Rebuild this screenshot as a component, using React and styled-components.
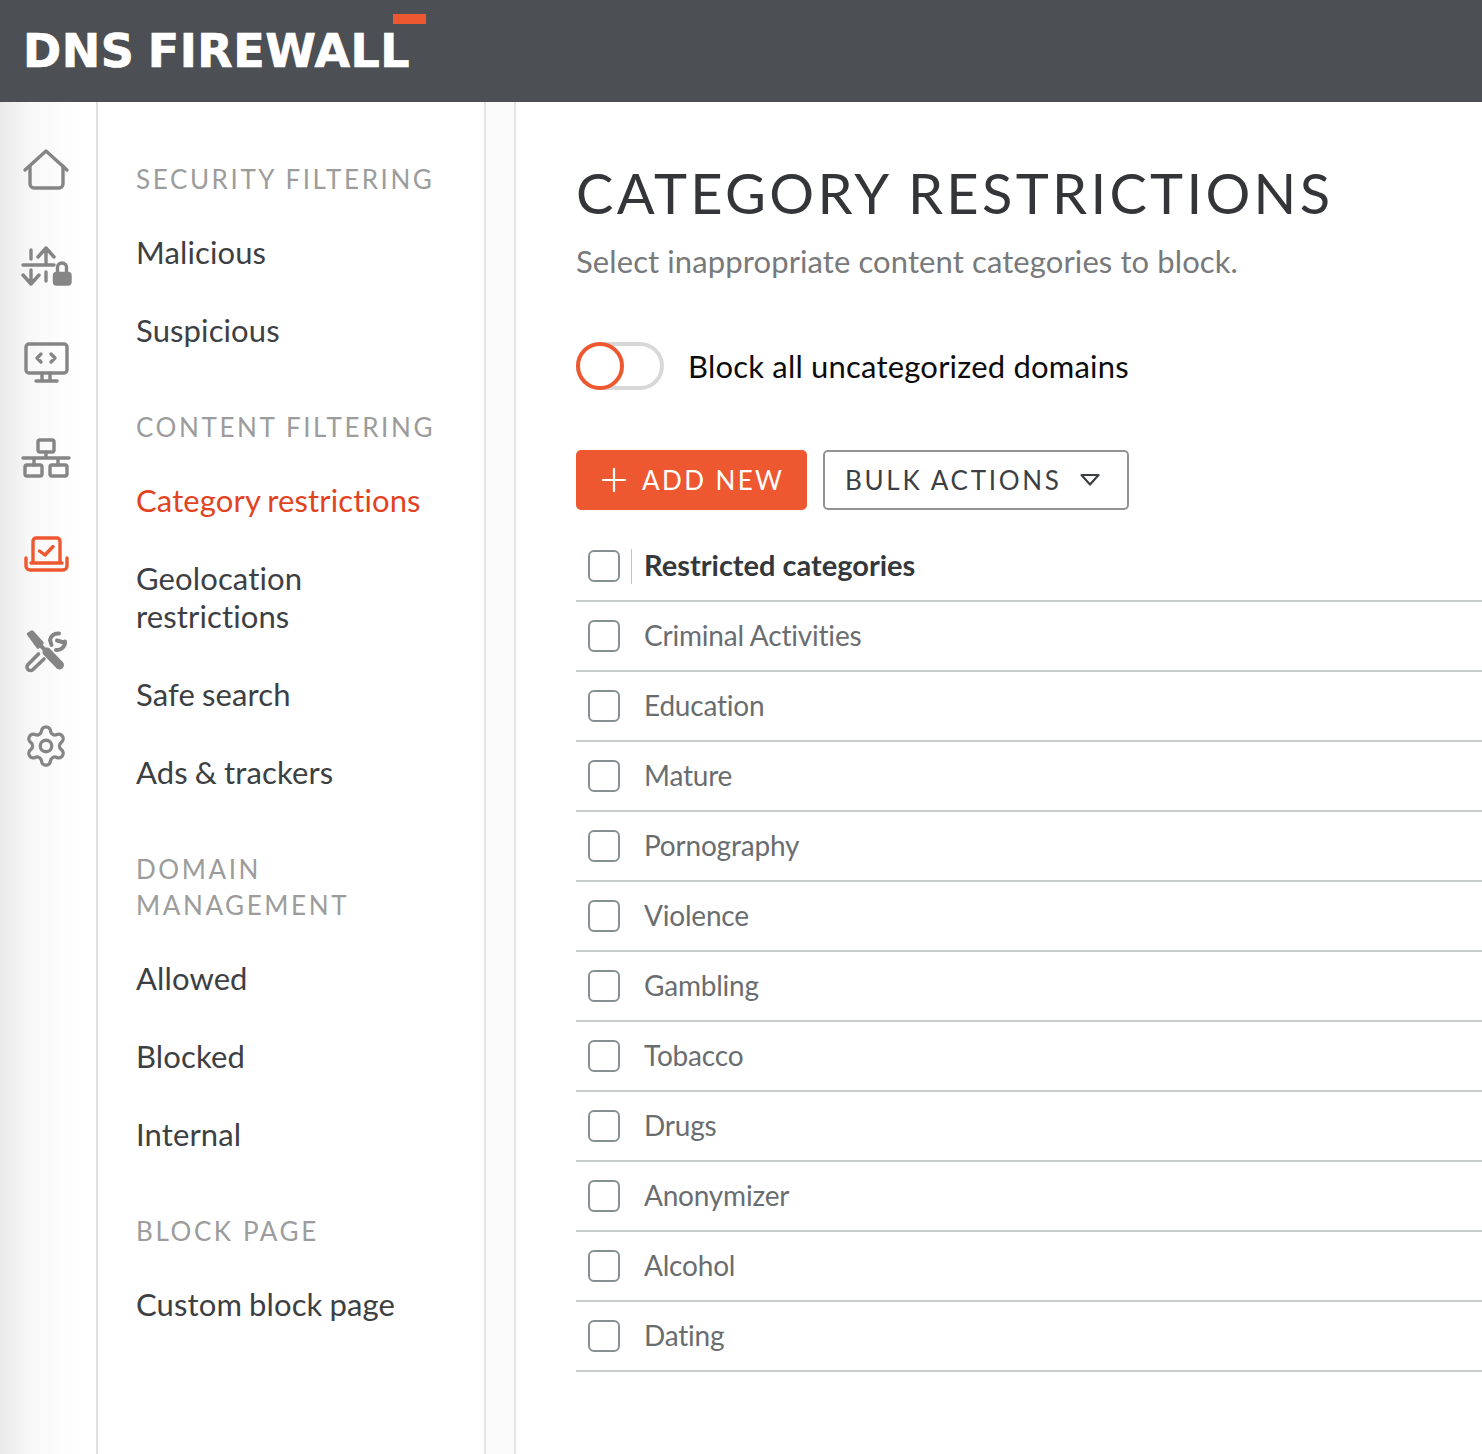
import React from "react";
import styled, { createGlobalStyle } from "styled-components";
import { Settings, Plus } from "lucide-react";

const Global = createGlobalStyle`
  html, body { margin: 0; padding: 0; background: #fff; }
  body { font-family: Lato, "Open Sans", sans-serif; font-variant-ligatures: none; }
  * { box-sizing: border-box; }
`;
const Page = styled.div`width: 1482px; height: 1454px; display: flex; flex-direction: column; overflow: hidden;`;
const Header = styled.header`height: 102px; background: #4c4f53; display: flex; align-items: flex-start; padding: 14px 0 0 23px; flex: none;`;
const Logo = styled.div`
  position: relative; font-family: "DejaVu Sans", sans-serif; font-weight: 700; font-size: 46px; line-height: 74px; color: #fff; letter-spacing: 0.5px; white-space: nowrap;
  -webkit-text-stroke: 0.7px #fff; word-spacing: -3px;
`;
const LogoBar = styled.span`position: absolute; right: -16px; top: 0; width: 33px; height: 10px; background: #ee5830;`;
const Body = styled.div`flex: 1; display: flex; min-height: 0;`;
const Rail = styled.nav`
  width: 98px; flex: none; padding-top: 20px; display: flex; flex-direction: column;
  background: linear-gradient(90deg, #e9e9e9 0, #f8f8f8 30px, #fff 80px); border-right: 2px solid #e0e0e0;
`;
const RailSlot = styled.div`height: 96px; display: flex; align-items: center; justify-content: flex-start; padding-left: 14px; color: ${p => p.$active ? "#ee5830" : "#858585"};`;
const Side = styled.aside`width: 388px; flex: none; padding: 59px 0 0 38px; border-right: 2px solid #e4e4e4;`;
const Gutter = styled.div`width: 30px; flex: none; background: #fbfbfb; border-right: 2px solid #e4e4e4;`;
const Group = styled.section`& + & { margin-top: 38px; }`;
const GroupTitle = styled.h3`
  margin: 0 0 18px; font-weight: 400; font-size: 26px; line-height: 36px; letter-spacing: 2.6px; color: #9c9c9c; width: 320px;
`;
const NavItem = styled.div`font-size: 31px; line-height: 38px; padding: 18px 0 22px; letter-spacing: 0.12px; word-spacing: -1px; color: ${p => p.$active ? "#e2431f" : "#3d4043"}; width: 300px;`;
const Main = styled.main`flex: 1; padding: 58px 0 0 60px; min-width: 0;`;
const Title = styled.h1`margin: 0; font-weight: 400; font-size: 56px; line-height: 66px; letter-spacing: 3.3px; color: #333538; white-space: nowrap;`;
const Sub = styled.p`margin: 16px 0 0; font-size: 31px; line-height: 38px; letter-spacing: 0.1px; color: #77797b; white-space: nowrap;`;
const ToggleRow = styled.div`display: flex; align-items: center; margin-top: 62px; height: 48px;`;
const Toggle = styled.div`position: relative; width: 88px; height: 48px; border-radius: 24px; border: 4px solid #d8d8d8; background: #fff;`;
const Knob = styled.span`position: absolute; left: -4px; top: -4px; width: 48px; height: 48px; border-radius: 50%; border: 4px solid #ee5830; background: #fff;`;
const ToggleLabel = styled.span`margin-left: 24px; font-size: 31px; line-height: 34px; letter-spacing: 0.2px; color: #0c0c0c;`;
const Actions = styled.div`display: flex; gap: 16px; margin-top: 60px;`;
const AddButton = styled.button`
  width: 231px; height: 60px; border: 0; border-radius: 5px; background: #ee5830; color: #fff; display: flex; align-items: center; padding: 0 0 0 19px; gap: 9px;
  font: 400 26px Lato, sans-serif; letter-spacing: 2.4px;
`;
const BulkButton = styled.button`
  width: 306px; height: 60px; border: 2px solid #939393; border-radius: 5px; background: #fff; color: #3d4043; display: flex; align-items: center; padding: 0 0 0 20px;
  font: 400 26px Lato, sans-serif; letter-spacing: 2.7px;
`;
const Caret = styled.svg`margin-left: 16px; flex: none;`;
const Table = styled.div`margin-top: 22px;`;
const Row = styled.div`height: 70px; display: flex; align-items: center; padding-left: 12px; border-bottom: 2px solid #c8cbcd;`;
const Check = styled.span`width: 32px; height: 32px; border: 2px solid #859092; border-radius: 6px; background: #fff; flex: none;`;
const HeadDivider = styled.span`width: 1px; height: 35px; background: #c4c4c4; margin: 0 12px 0 11px; flex: none;`;
const HeadLabel = styled.span`font-size: 29px; line-height: 34px; margin-top: -2px; font-weight: 700; color: #35383b;`;
const RowLabel = styled.span`margin: -2px 0 0 24px; font-size: 28px; line-height: 34px; letter-spacing: -0.2px; color: #6a6d70;`;

const I = ({ cy, children, fill = "none" }) => (
  <svg width="64" height="64" viewBox={`14 ${cy - 32} 64 64`} fill={fill} stroke="currentColor" strokeWidth="3.4" strokeLinecap="round" strokeLinejoin="round">{children}</svg>
);

const groups = [
  ["SECURITY FILTERING", ["Malicious", "Suspicious"]],
  ["CONTENT FILTERING", ["Category restrictions", "Geolocation restrictions", "Safe search", "Ads & trackers"]],
  ["DOMAIN MANAGEMENT", ["Allowed", "Blocked", "Internal"]],
  ["BLOCK PAGE", ["Custom block page"]],
];
const cats = ["Criminal Activities", "Education", "Mature", "Pornography", "Violence", "Gambling", "Tobacco", "Drugs", "Anonymizer", "Alcohol", "Dating"];

export default function App() {
  return (
    <Page>
      <Global />
      <Header><Logo>DNS FIREWALL<LogoBar /></Logo></Header>
      <Body>
        <Rail>
          <RailSlot><I cy={170}><path d="M25 170 46 151l21 19" /><path d="M30 166v18a4 4 0 0 0 4 4h25a4 4 0 0 0 4-4v-18" /></I></RailSlot>
          <RailSlot><I cy={266}>
            <path d="M31 250v9M23 265h31M31 270v13M23 275l8 9 8-9M46 248v15M38 257l8-9 8 9M46 272v9" />
            <path d="M57.500 273v-5.500a4.500 4.500 0 0 1 9 0v5.500" strokeWidth="3.400" />
            <rect x="54.500" y="273.500" width="15.500" height="10.500" rx="2" fill="currentColor" />
          </I></RailSlot>
          <RailSlot><I cy={362}>
            <rect x="26" y="344" width="41" height="29" rx="3" />
            <path d="M41 354l-4 4 4 4M51 354l4 4-4 4M42 373v7M50 373v7M36 381h21" />
          </I></RailSlot>
          <RailSlot><I cy={458}>
            <rect x="38" y="440" width="16" height="12" rx="2" />
            <path d="M46 452v6M23 458h46M34 458v7M58 458v7" />
            <rect x="25" y="465" width="17" height="11" rx="2" />
            <rect x="50" y="465" width="17" height="11" rx="2" />
          </I></RailSlot>
          <RailSlot $active><I cy={554}>
            <path d="M33 562v-21a3 3 0 0 1 3-3h21a3 3 0 0 1 3 3v21M31 563h31" />
            <path d="M26 558v8a4 4 0 0 0 4 4h33a4 4 0 0 0 4-4v-8" />
            <path d="M39.500 551l5.500 4 8-8.500" />
          </I></RailSlot>
          <RailSlot><I cy={650}>
            <path d="M28.500 634 32 632l10 11-4 4z" fill="currentColor" strokeWidth="3.400" />
            <path d="M40 645l6 6" strokeWidth="4" />
            <path d="M47 652l12.500 13" strokeWidth="9" />
            <path d="M38.500 654 28 664.500a3.500 3.500 0 0 0 5 5L44 659" strokeWidth="3.600" />
            <path d="M59 633.500a8 8 0 0 0-9 6.500l1.500 5M57 640.500l7 2M65 641.500a8 8 0 0 1-9 8.500" strokeWidth="4" />
          </I></RailSlot>
          <RailSlot><Settings size={46} strokeWidth={1.7} style={{ marginLeft: 9 }} /></RailSlot>
        </Rail>
        <Side>
          {groups.map(([t, items]) => (
            <Group key={t}>
              <GroupTitle>{t}</GroupTitle>
              {items.map(i => <NavItem key={i} $active={i === "Category restrictions"}>{i}</NavItem>)}
            </Group>
          ))}
        </Side>
        <Gutter />
        <Main>
          <Title>CATEGORY RESTRICTIONS</Title>
          <Sub>Select inappropriate content categories to block.</Sub>
          <ToggleRow>
            <Toggle><Knob /></Toggle>
            <ToggleLabel>Block all uncategorized domains</ToggleLabel>
          </ToggleRow>
          <Actions>
            <AddButton><Plus size={38} strokeWidth={1.4} />ADD NEW</AddButton>
            <BulkButton>BULK ACTIONS
              <Caret width="24" height="16" viewBox="0 0 24 16" fill="none" stroke="#3d4043" strokeWidth="2.200" strokeLinejoin="round"><path d="M3.500 3h17l-8.500 9.500z" /></Caret>
            </BulkButton>
          </Actions>
          <Table>
            <Row><Check /><HeadDivider /><HeadLabel>Restricted categories</HeadLabel></Row>
            {cats.map(c => <Row key={c}><Check /><RowLabel>{c}</RowLabel></Row>)}
          </Table>
        </Main>
      </Body>
    </Page>
  );
}
